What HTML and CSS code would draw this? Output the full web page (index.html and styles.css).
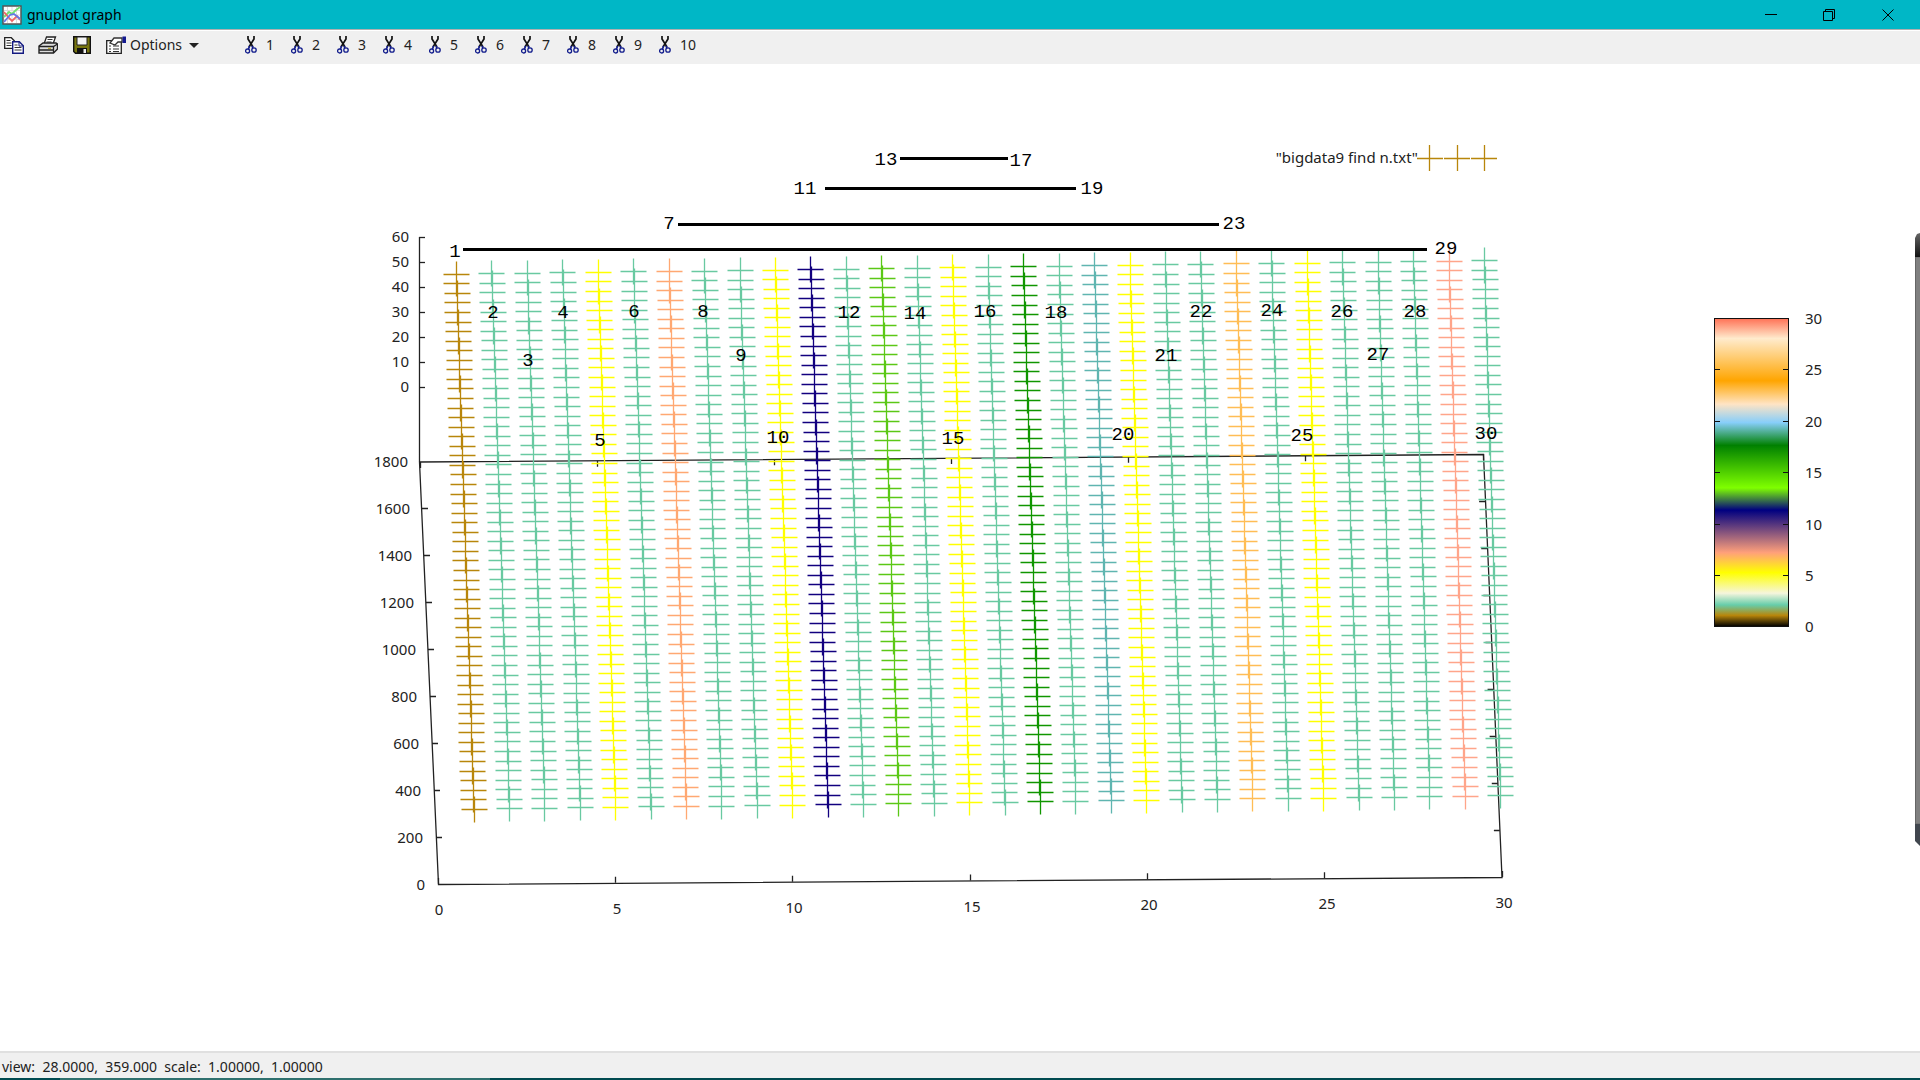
FILE: index.html
```html
<!DOCTYPE html>
<html lang="en">
<head>
<meta charset="utf-8">
<title>gnuplot graph</title>
<link rel="stylesheet" href="styles.css">
</head>
<body>
<svg class="defs" aria-hidden="true">
  <symbol id="scissors" viewBox="0 0 12 18">
    <path d="M3 0v3l5 8M9 0v3l-5 8" fill="none" stroke="#111" stroke-width="1.700"/>
    <path d="M4.500 10L3.500 13M7 10l1 2" stroke="#111c8c" stroke-width="1.700"/>
    <circle cx="2.600" cy="15" r="2" fill="none" stroke="#111c8c" stroke-width="1.300"/>
    <circle cx="9" cy="14" r="2.200" fill="none" stroke="#111c8c" stroke-width="1.300"/>
  </symbol>
</svg>

<header class="titlebar">
  <svg class="app-icon" viewBox="0 0 20 20" aria-hidden="true">
    <rect x="1" y="1" width="18" height="18" fill="#fff" stroke="#555" stroke-width="1.500"/>
    <path d="M5.500 2v16M10 2v16M14.500 2v16M2 5.500h16M2 10h16M2 14.500h16" stroke="#ddd"/>
    <path d="M2 12l5-5 3 2 4-4 4-3" fill="none" stroke="#6fe06f" stroke-width="1.800"/>
    <path d="M2 7l5 6 3 3 5-5 3 4" fill="none" stroke="#f06464" stroke-width="1.800"/>
    <path d="M2 17l6-7 4-1 5 4 1 1" fill="none" stroke="#6478e6" stroke-width="1.800"/>
  </svg>
  <h1 class="title">gnuplot graph</h1>
  <div class="window-buttons">
    <button class="window-button" aria-label="Minimize"><svg viewBox="0 0 12 12"><path d="M0 5.500h12"/></svg></button>
    <button class="window-button" aria-label="Restore"><svg viewBox="0 0 12 12"><path d="M.5 2.500h9v9h-9zM2.500 2.500v-2h9v9h-2"/></svg></button>
    <button class="window-button" aria-label="Close"><svg viewBox="0 0 12 12"><path d="M.5 .5l11 11M11.500 .5l-11 11"/></svg></button>
  </div>
</header>

<nav class="toolbar" aria-label="Plot tools">
  <button class="tool" aria-label="Copy">
    <svg viewBox="0 0 20 18"><path d="M.7 1.700h6.600l3 3v7.600H.7z" fill="#fff" stroke="#222" stroke-width="1.300"/><path d="M2.500 4.500h4M2.500 7h5M2.500 9.500h5" stroke="#333"/><path d="M8.700 5.700h6.600l4 4v7.600H8.700z" fill="#fff" stroke="#141a80" stroke-width="1.400"/><path d="M15 6v4h4" fill="none" stroke="#141a80"/><path d="M10.500 9h3M10.500 11.500h7M10.500 14h7" stroke="#333"/></svg>
  </button>
  <button class="tool" aria-label="Print">
    <svg viewBox="0 0 20 18"><path d="M6 8l2.500-7h9L15 8" fill="#fff" stroke="#222" stroke-width="1.300"/><path d="M9.500 3.500h5M8.500 6h5" stroke="#333"/><path d="M1 10l4-3h13l1.500 1v5l-4 4H1z" fill="#ddd" stroke="#222" stroke-width="1.400"/><path d="M1 10.500h14.500l4-2.500M15.500 10.500V17M1 14h14.500" fill="none" stroke="#222" stroke-width="1.300"/><path d="M10 12.300h3" stroke="#b5a000"/></svg>
  </button>
  <button class="tool" aria-label="Save">
    <svg viewBox="0 0 18 18"><path d="M.7.7h16.600v16.600H2.500L.7 15.500z" fill="#77750f" stroke="#111" stroke-width="1.400"/><path d="M4 1h10v8H4z" fill="#f4f4f4" stroke="#222"/><path d="M4 12h10v5H4z" fill="#111"/><path d="M10.500 13h2.500v4h-2.500z" fill="#eee"/></svg>
  </button>
  <button class="tool options">
    <svg viewBox="0 0 20 18"><path d="M.7 4.700h14.600v12.600H.7z" fill="#fff" stroke="#222" stroke-width="1.300"/><path d="M3 10h2M7 10h6M3 13h2M7 13h6M3 15.500h2M7 15.500h6" stroke="#333"/><path d="M4 7l4-5h8v4h-4l-3 3z" fill="#fff" stroke="#333" stroke-width="1.300"/><path d="M16.500.5H20V7h-3.500z" fill="#141a90"/></svg>
    <span>Options</span>
    <i class="caret"></i>
  </button>
  <div class="toggles" id="toggles"></div>
</nav>

<main class="plot">
  <svg id="graph" class="graph" viewBox="0 64 1920 987" role="img" aria-label="bigdata9 find n.txt">
    <defs>
      <linearGradient id="palette" x1="0" y1="0" x2="0" y2="1">
        <stop offset="0" stop-color="#ff7256"/><stop offset=".065" stop-color="#ffebcd"/>
        <stop offset=".202" stop-color="#ffa500"/><stop offset=".278" stop-color="#ffe4c4"/>
        <stop offset=".338" stop-color="#87cefa"/><stop offset=".412" stop-color="#008000"/>
        <stop offset=".55" stop-color="#7fff00"/><stop offset=".622" stop-color="#000080"/>
        <stop offset=".76" stop-color="#ffa07a"/><stop offset=".825" stop-color="#ffff00"/>
        <stop offset=".892" stop-color="#f5f5dc"/><stop offset=".93" stop-color="#66cdaa"/>
        <stop offset=".964" stop-color="#b8860b"/><stop offset="1" stop-color="#000"/>
      </linearGradient>
      <linearGradient id="cap" x1="0" y1="0" x2="0" y2="1">
        <stop offset="0" stop-color="#666"/><stop offset="1" stop-color="#111"/>
      </linearGradient>
    </defs>
  </svg>
</main>

<footer class="status">view:&nbsp; 28.0000,&nbsp; 359.000&nbsp; scale:&nbsp; 1.00000,&nbsp; 1.00000</footer>
<div class="taskbar-edge"></div>
<script src="plot.js"></script>
</body>
</html>
```
FILE: styles.css
```css
* { box-sizing: border-box; }

body {
  margin: 0;
  min-height: 100vh;
  display: flex;
  flex-direction: column;
  background: #fff;
  color: #000;
  font: 14px/20px "Noto Sans", "Open Sans", sans-serif;
}

button {
  border: 0;
  padding: 0;
  background: none;
  color: inherit;
  font: inherit;
}

.defs { display: none; }

.titlebar {
  display: flex;
  align-items: center;
  height: 29px;
  padding: 0 2px;
  background: #00b7c6;
}

.app-icon { width: 20px; height: 20px; }

.title {
  flex: 1;
  margin: 0 0 0 5px;
  font-size: 14px;
  font-weight: 400;
}

.window-buttons { display: flex; }

.window-button {
  display: flex;
  align-items: center;
  justify-content: center;
  width: 58px;
  height: 28px;
}

.window-button:last-child { width: 60px; }

.window-button svg {
  width: 12px;
  height: 12px;
  fill: none;
  stroke: #000;
}

.toolbar {
  display: flex;
  align-items: center;
  gap: 14px;
  height: 35px;
  padding: 0 0 4px 4px;
  border-top: 1px solid #b0b0b0;
  background: #f0f0f0;
  box-shadow: inset 0 1px #fff;
  color: #222;
}

.tool {
  display: flex;
  align-items: center;
}

.tool svg { width: 20px; height: 18px; }

.options span { margin: 0 7px 0 4px; }

.caret {
  border: 5px solid transparent;
  border-top-color: #222;
  border-bottom: 0;
}

.toggles { display: flex; margin-left: 32px; }

.toggle {
  display: flex;
  align-items: center;
  gap: 9px;
  width: 46px;
}

.toggle svg { width: 12px; height: 18px; }

.plot { flex: 1; }

.graph { display: block; width: 100%; }

.graph text { fill: #222; font-size: 15px; }

.graph .note {
  fill: #000;
  font: 19px "Liberation Mono", monospace;
  text-anchor: middle;
}

.end { text-anchor: end; }
.middle { text-anchor: middle; }

.axis { fill: none; stroke: #222; stroke-width: 1.3; }
.pair { stroke: #000; stroke-width: 3; }
.points { fill: none; stroke-width: 1.3; }

.status {
  height: 27px;
  padding: 4px 2px 0;
  border-top: 2px solid #e0e0e0;
  background: #f0f0f0;
  color: #222;
}

.taskbar-edge {
  height: 2px;
  background: linear-gradient(90deg, #004a50 60px, #2f706e 60px 490px, #004a50 490px);
}
```
FILE: plot.js
```js
const graph = document.getElementById('graph');

function add(name, attrs, text) {
  const el = document.createElementNS('http://www.w3.org/2000/svg', name);
  for (const key in attrs) el.setAttribute(key, attrs[key]);
  if (text !== undefined) el.textContent = text;
  graph.appendChild(el);
}
const px = v => Math.floor(v) + 0.5;
const mix = (a, b, t) => a + (b - a) * t;

// Toolbar toggles for each plot
document.getElementById('toggles').innerHTML = Array.from({ length: 10 }, (_, i) =>
  `<button class="toggle"><svg aria-hidden="true"><use href="#scissors"/></svg>${i + 1}</button>`).join('');

// Base rectangle and z axis
add('path', { class: 'axis', d: 'M419.5 237V462M419.5 462L438.5 884.5L1502 877.5L1483.5 454.5Z' });
for (let i = 0; i < 7; i++) {
  const y = 237 + i * 25;
  add('path', { class: 'axis', d: `M419 ${y + 0.5}h6` });
  add('text', { class: 'end', x: 409, y: y + 5 }, 60 - i * 10);
}
for (let i = 0; i < 10; i++) {
  const t = i / 9;
  const left = mix(420, 438, t);
  const right = mix(1483, 1502, t);
  // The corners carry no tick of their own
  if (i > 0 && i < 9) {
    const y = px(mix(462, 884, t));
    add('path', { class: 'axis', d: `M${left} ${y}h6M${right} ${px(mix(454, 877, t))}h-6` });
  }
  add('text', { class: 'end', x: Math.round(mix(408, 425, t)), y: Math.round(mix(467, 890, t)) }, 1800 - i * 200);
}
for (let i = 0; i < 7; i++) {
  const t = i / 6;
  add('path', { class: 'axis', d: `M${px(mix(438, 1502, t))} ${mix(884, 877, t)}v-6M${px(mix(420, 1483, t))} ${mix(462, 454, t)}v6` });
  add('text', { class: 'middle', x: Math.round(mix(439, 1504, t)), y: Math.round(mix(915, 908, t)) }, i * 5);
}

// Columns of plus markers
const colors = {
  1: '#b8860b', 5: '#ffff00', 7: '#ffa872', 10: '#ffff00', 11: '#12007f', 13: '#5bc816',
  15: '#ffff00', 17: '#109600', 19: '#5fb5b0', 20: '#ffff00', 23: '#ffbd55', 25: '#ffff00', 29: '#ffa58a'
};
for (let n = 1; n <= 30; n++) {
  const c = (n - 1) / 29;
  let d = '';
  for (let r = 0; r < 57; r++) {
    const t = r / 56;
    const x = px(mix(mix(456.5, 1484.5, c), mix(474.2, 1500.7, c), t));
    const y = px(mix(mix(274.3, 260.7, c), mix(809.3, 795.7, c), t));
    d += `M${x - 13} ${y}h26M${x} ${y - 13}v26`;
  }
  add('path', { class: 'points', stroke: colors[n] || '#69c9a1', d });
}

// Legend
add('text', { class: 'end', x: 1418, y: 163 }, '"bigdata9 find n.txt"');
add('path', {
  class: 'points', stroke: '#b8860b',
  d: 'M1417 158.5h26M1429.5 145v26M1444 158.5h26M1457.5 145v26M1471 158.5h26M1484.5 145v26'
});

// Colour box
add('rect', { x: 1714.5, y: 318.5, width: 74, height: 308, fill: 'url(#palette)', stroke: '#111' });
for (let i = 0; i < 7; i++) {
  const y = Math.round(318 + i * 51.4);
  add('path', { stroke: '#111', d: `M1715 ${y + 0.5}h5M1788 ${y + 0.5}h-5` });
  add('text', { x: 1805, y: y + 6 }, 30 - i * 5);
}

// Lines joining the prime pairs
[[900, 1008, 158.5], [825, 1076, 188.5], [678, 1219, 224.5], [463, 1427, 249.5]].forEach(([a, b, y]) =>
  add('path', { class: 'pair', d: `M${a} ${y}H${b}` }));

// Column numbers: n, centre, baseline
[[1, 455, 257], [2, 493, 318], [3, 528, 366], [4, 563, 318], [5, 600, 446], [6, 634, 317], [7, 669, 229],
 [8, 703, 317], [9, 741, 361], [10, 778, 443], [11, 805, 194], [12, 849, 318], [13, 886, 165], [14, 915, 319],
 [15, 953, 444], [16, 985, 317], [17, 1021, 166], [18, 1056, 318], [19, 1092, 194], [20, 1123, 440],
 [21, 1166, 361], [22, 1201, 317], [23, 1234, 229], [24, 1272, 316], [25, 1302, 441], [26, 1342, 317],
 [27, 1378, 360], [28, 1415, 317], [29, 1446, 254], [30, 1486, 439]
].forEach(([n, x, y]) => add('text', { class: 'note', x, y }, n));

// Edge of the screen magnifier
add('path', { fill: '#808080', stroke: '#666', d: 'M1915.500 257h5v567h-5z' });
add('path', { fill: 'url(#cap)', d: 'M1920 233l-3 1-2 4v19h5z' });
add('path', { fill: '#41464e', d: 'M1915 824h5v22l-5-5z' });
```
